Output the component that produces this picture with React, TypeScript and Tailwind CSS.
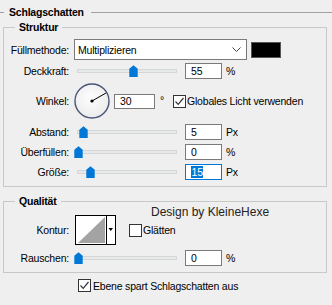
import React from "react";

const Check = ({ checked }: { checked: boolean }) => (
  <div className="w-[13px] h-[13px] border border-[#333333] bg-white flex items-center justify-center shrink-0">
    {checked && (
      <svg width="11" height="11" viewBox="0 0 11 11">
        <path d="M1.5 5.5 L4.2 8.3 L9.5 2" fill="none" stroke="#333333" strokeWidth="1.2" />
      </svg>
    )}
  </div>
);

const Thumb = () => (
  <svg width="9" height="12" viewBox="0 0 9 12">
    <path d="M4.5 0.3 L8.7 3.8 V12 H0.3 V3.8 Z" fill="#0078d7" />
  </svg>
);

const Slider = ({ thumb }: { thumb: number }) => (
  <div className="relative ml-[5px] w-[106px] h-[16px] flex items-center shrink-0">
    <div className="ml-[3px] w-[100px] h-[4px] bg-[#e7eaea] border border-[#d6d6d6]" />
    <div className="absolute top-[2px]" style={{ left: thumb - 4.5 }}>
      <Thumb />
    </div>
  </div>
);

const Field = ({ value, focused }: { value: string; focused?: boolean }) => (
  <div
    className={
      "ml-[5px] w-[37px] h-[16px] bg-white flex items-center pl-[5px] shrink-0 border " +
      (focused ? "border-[#0078d7]" : "border-[#7a7a7a]")
    }
  >
    {focused ? (
      <span className="bg-[#0078d7] text-white leading-[12px] px-[0.5px]">{value}</span>
    ) : (
      <span>{value}</span>
    )}
  </div>
);

const Label = ({ children }: { children: React.ReactNode }) => (
  <div className="w-[65px] text-right shrink-0 whitespace-nowrap">{children}</div>
);

const SliderRow = ({
  label,
  thumb,
  value,
  unit,
  focused,
  className,
}: {
  label: string;
  thumb: number;
  value: string;
  unit: string;
  focused?: boolean;
  className?: string;
}) => (
  <div className={"flex items-center h-[16px] " + (className ?? "")}>
    <Label>{label}</Label>
    <Slider thumb={thumb} />
    <Field value={value} focused={focused} />
    <span className="ml-[4px]">{unit}</span>
  </div>
);

export default function App() {
  return (
    <div
      className="relative w-[332px] h-[305px] bg-[#efefef] text-black text-[10.5px] tracking-[-0.2px] leading-[12px] overflow-hidden"
      style={{ fontFamily: '"Liberation Sans", Arial, sans-serif' }}
    >
      {/* header */}
      <div className="mt-[3px] h-[18px] flex items-center">
        <div className="w-[4px] h-px bg-[#a0a0a0]" />
        <div className="ml-[5px] font-bold whitespace-nowrap">Schlagschatten</div>
        <div className="ml-[7px] flex-1 h-px bg-[#a0a0a0]" />
      </div>

      {/* Struktur */}
      <fieldset className="ml-[3px] w-[324px] border border-[#c8c8c8] p-0 m-0 pb-[6px]">
        <legend className="ml-[11px] px-[4px] font-bold leading-[12px]">Struktur</legend>
        <div className="flex items-center h-[21px] mt-[6px]">
          <Label>Füllmethode:</Label>
          <div className="ml-[5px] w-[173px] h-[21px] bg-white border border-[#7a7a7a] flex items-center pl-[3px] pr-[5px] shrink-0">
            <span className="flex-1">Multiplizieren</span>
            <svg width="9" height="5" viewBox="0 0 9 5">
              <polyline points="0.5,0.5 4.5,4.5 8.5,0.5" fill="none" stroke="#444" strokeWidth="1" />
            </svg>
          </div>
          <div className="ml-[4px] w-[30px] h-[16px] bg-black border border-[#555]" />
        </div>

        <SliderRow className="mt-[3px]" label="Deckkraft:" thumb={59} value="55" unit="%" />

        <div className="flex items-center h-[36px] mt-[4px]">
          <Label>Winkel:</Label>
          <svg className="ml-[5px] shrink-0" width="36" height="36" viewBox="0 0 36 36">
            <defs>
              <radialGradient id="dialg" cx="0.45" cy="0.4" r="0.6">
                <stop offset="0" stopColor="#fdfdfd" />
                <stop offset="1" stopColor="#ececec" />
              </radialGradient>
            </defs>
            <circle cx="18" cy="18" r="17" fill="url(#dialg)" stroke="#4b5577" strokeWidth="1.4" />
            <line x1="18" y1="18" x2="32" y2="10" stroke="#000" strokeWidth="1" />
            <circle cx="18" cy="18" r="1.6" fill="#000" />
          </svg>
          <div className="ml-[4px] w-[41px] h-[15px] bg-white border border-[#7a7a7a] flex items-center pl-[5px] shrink-0">
            30
          </div>
          <span className="ml-[5px] self-start mt-[11px]">°</span>
          <div className="ml-[9px] flex items-center">
            <Check checked />
            <span className="ml-[1px] whitespace-nowrap">Globales Licht verwenden</span>
          </div>
        </div>

        <SliderRow className="mt-[5px]" label="Abstand:" thumb={9.5} value="5" unit="Px" />
        <SliderRow className="mt-[4px]" label="Überfüllen:" thumb={4.5} value="0" unit="%" />
        <SliderRow className="mt-[4px]" label="Größe:" thumb={16.5} value="15" unit="Px" focused />
      </fieldset>

      {/* Qualität */}
      <fieldset className="mt-[8px] ml-[3px] w-[324px] border border-[#c8c8c8] p-0 m-0 pb-[6px]">
        <legend className="ml-[11px] px-[4px] font-bold leading-[12px]">Qualität</legend>
        <div className="flex items-center h-[30px] mt-[8px]">
          <Label>Kontur:</Label>
          <svg className="ml-[6px] shrink-0" width="41" height="30" viewBox="0 0 41 30">
            <rect x="0.5" y="0.5" width="40" height="29" fill="#fff" stroke="#000" />
            <polygon points="3,28 30,2 30,28" fill="#a3a3a3" />
            <line x1="31.5" y1="0" x2="31.5" y2="30" stroke="#000" />
            <polygon points="33.5,13 38,13 35.75,16" fill="#000" />
          </svg>
          <div className="ml-[13px] flex items-center">
            <Check checked={false} />
            <span className="ml-[1px]">Glätten</span>
          </div>
        </div>
        <SliderRow className="mt-[5px]" label="Rauschen:" thumb={4.5} value="0" unit="%" />
      </fieldset>

      <div className="mt-[6px] ml-[78px] flex items-center">
        <Check checked />
        <span className="ml-[2px] whitespace-nowrap">Ebene spart Schlagschatten aus</span>
      </div>

      <div className="absolute left-[151px] top-[205px] text-[12px] tracking-normal leading-[14px] text-[#222] whitespace-nowrap">
        Design by KleineHexe
      </div>
    </div>
  );
}
